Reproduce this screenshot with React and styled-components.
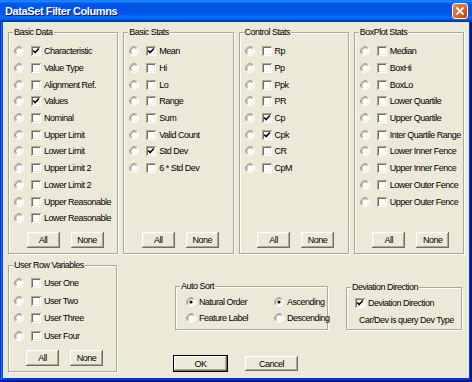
import React from 'react';
import styled, { createGlobalStyle } from 'styled-components';

const GlobalStyle = createGlobalStyle`
  html, body {
    margin: 0;
    padding: 0;
    background: #ece9d8;
  }
  * {
    box-sizing: border-box;
  }
`;

const uiFont = `"Liberation Sans", Arial, sans-serif`;

const groups = [
    {
        title: 'Basic Data',
        items: [
            ['Characteristic', true],
            ['Value Type', false],
            ['Alignment Ref.', false],
            ['Values', true],
            ['Nominal', false],
            ['Upper Limit', false],
            ['Lower Limit', false],
            ['Upper Limit 2', false],
            ['Lower Limit 2', false],
            ['Upper Reasonable', false],
            ['Lower Reasonable', false],
        ],
    },
    {
        title: 'Basic Stats',
        items: [
            ['Mean', true],
            ['Hi', false],
            ['Lo', false],
            ['Range', false],
            ['Sum', false],
            ['Valid Count', false],
            ['Std Dev', true],
            ['6 * Std Dev', false],
        ],
    },
    {
        title: 'Control Stats',
        items: [
            ['Rp', false],
            ['Pp', false],
            ['Ppk', false],
            ['PR', false],
            ['Cp', true],
            ['Cpk', true],
            ['CR', false],
            ['CpM', false],
        ],
    },
    {
        title: 'BoxPlot Stats',
        items: [
            ['Median', false],
            ['BoxHi', false],
            ['BoxLo', false],
            ['Lower Quartile', false],
            ['Upper Quartile', false],
            ['Inter Quartile Range', false],
            ['Lower Inner Fence', false],
            ['Upper Inner Fence', false],
            ['Lower Outer Fence', false],
            ['Upper Outer Fence', false],
        ],
    },
];

const userRows = ['User One', 'User Two', 'User Three', 'User Four'];

function Radio({ checked }) {
    return (
        <RadioSvg width="10" height="10" viewBox="0 0 10 10">
            <circle cx="5" cy="5" r="4" fill="#fff" />
            <path d="M1.82 8.18 A4.5 4.5 0 0 1 8.18 1.82" stroke="#aca899" fill="none" />
            <path d="M8.18 1.82 A4.5 4.5 0 0 1 1.82 8.18" stroke="#fff" fill="none" />
            <path d="M2.53 7.47 A3.5 3.5 0 0 1 7.47 2.53" stroke="#8a8778" fill="none" />
            <path d="M7.47 2.53 A3.5 3.5 0 0 1 2.53 7.47" stroke="#f1efe2" fill="none" />
            {checked && <circle cx="5" cy="5" r="1.6" fill="#000" />}
        </RadioSvg>
    );
}

function Check({ checked }) {
    return (
        <CheckBox>
            {checked && (
                <svg width="10" height="10" viewBox="0 0 10 10">
                    <path d="M2.2 4.6 L4.1 6.6 L7.9 2.6" stroke="#000" strokeWidth="1.5" fill="none" />
                </svg>
            )}
        </CheckBox>
    );
}

function ItemRow({ label, checked }) {
    return (
        <Row>
            <Radio />
            <Check checked={checked} />
            <Label>{label}</Label>
        </Row>
    );
}

function AllNone() {
    return (
        <ButtonRow>
            <Button>All</Button>
            <Button>None</Button>
        </ButtonRow>
    );
}

function App() {
    return (
        <>
            <GlobalStyle />
            <Window>
                <TitleBar>
                    <Title>DataSet Filter Columns</Title>
                    <CloseButton>
                        <svg width="10" height="10" viewBox="0 0 10 10">
                            <path d="M1.5 1.5 L8.5 8.5 M8.5 1.5 L1.5 8.5" stroke="#fff" strokeWidth="1.8" />
                        </svg>
                    </CloseButton>
                </TitleBar>
                <Client>
                    <TopRow>
                        {groups.map(g => (
                            <GroupBox key={g.title} $height={222} $padTop={10}>
                                <Legend>{g.title}</Legend>
                                <ItemList $rowHeight={16.7}>
                                    {g.items.map(([label, checked]) => (
                                        <ItemRow key={label} label={label} checked={checked} />
                                    ))}
                                </ItemList>
                                <AllNone />
                            </GroupBox>
                        ))}
                    </TopRow>
                    <BottomRow>
                        <UserGroup>
                            <GroupBox $height={107} $padTop={8}>
                                <Legend>User Row Variables</Legend>
                                <ItemList $rowHeight={17.7}>
                                    {userRows.map(label => (
                                        <ItemRow key={label} label={label} />
                                    ))}
                                </ItemList>
                                <AllNone />
                            </GroupBox>
                        </UserGroup>
                        <RightArea>
                            <OptionsRow>
                                <SortGroup>
                                    <Legend>Auto Sort</Legend>
                                    <SortGrid>
                                        <Option><Radio checked /><Label>Natural Order</Label></Option>
                                        <Option><Radio checked /><Label>Ascending</Label></Option>
                                        <Option><Radio /><Label>Feature Label</Label></Option>
                                        <Option><Radio /><Label>Descending</Label></Option>
                                    </SortGrid>
                                </SortGroup>
                                <DeviationGroup>
                                    <Legend>Deviation Direction</Legend>
                                    <Option><Check checked /><Label>Deviation Direction</Label></Option>
                                    <Note>Car/Dev is query Dev Type</Note>
                                </DeviationGroup>
                            </OptionsRow>
                            <DialogButtons>
                                <DialogButton $default>OK</DialogButton>
                                <DialogButton>Cancel</DialogButton>
                            </DialogButtons>
                        </RightArea>
                    </BottomRow>
                </Client>
            </Window>
        </>
    );
}

const Window = styled.div`
    width: 472px;
    height: 382px;
    display: flex;
    flex-direction: column;
    background: #0831d9;
    padding: 0 3px 4px 3px;
    box-shadow: inset -1px -1px #00138c, inset 1px 1px #0831d9, inset -2px -2px #001ea0,
        inset 2px 2px #166aee, inset -3px -3px #003bda, inset 3px 3px #0855dd;
    font-family: ${uiFont};
    font-size: 9px;
    letter-spacing: -0.5px;
    color: #000;
`;

const TitleBar = styled.div`
    height: 22px;
    margin: 0 -3px;
    padding: 0 4px 0 5px;
    display: flex;
    align-items: center;
    justify-content: space-between;
    background: linear-gradient(180deg, #0058ee 0%, #3593ff 4%, #288eff 6%, #127dff 8%, #036ffc 10%,
        #0262ee 14%, #0057e5 20%, #0054e3 24%, #0055eb 56%, #005bf5 66%, #026afe 76%,
        #0062ef 86%, #0052d6 92%, #0040ab 94%, #003092 100%);
`;

const Title = styled.span`
    color: #fff;
    font-weight: bold;
    font-size: 11px;
    letter-spacing: -0.4px;
    text-shadow: 1px 1px #0f1089;
`;

const CloseButton = styled.div`
    width: 16px;
    height: 16px;
    display: flex;
    align-items: center;
    justify-content: center;
    border: 1px solid #fff;
    border-radius: 3px;
    background: radial-gradient(circle at 85% 85%, #cc4600 0%, #dc6527 50%, #e8916e 100%);
`;

const Client = styled.div`
    flex: 1;
    background: #ece9d8;
    padding: 10px 5px 0 5px;
`;

const TopRow = styled.div`
    display: grid;
    grid-template-columns: repeat(4, minmax(0, 1fr));
    column-gap: 5px;
`;

const GroupBox = styled.div`
    position: relative;
    height: ${p => p.$height}px;
    display: flex;
    flex-direction: column;
    padding: ${p => p.$padTop}px 4px 5px 5px;
    border: 1px solid #aca899;
    box-shadow: inset 1px 1px #fff, 1px 1px #fff;
`;

const Legend = styled.span`
    position: absolute;
    top: -7px;
    left: 4px;
    padding: 0 1px;
    background: #ece9d8;
    line-height: 12px;
    white-space: nowrap;
`;

const ItemList = styled.div`
    display: grid;
    grid-auto-rows: ${p => p.$rowHeight}px;
`;

const Row = styled.div`
    display: flex;
    align-items: center;
    white-space: nowrap;
`;

const RadioSvg = styled.svg`
    flex: none;
    display: block;
`;

const CheckBox = styled.div`
    flex: none;
    width: 10px;
    height: 10px;
    margin-left: 7px;
    background: #fff;
    box-shadow: inset 1px 1px #aca899, inset -1px -1px #fff, inset 2px 2px #716f64, inset -2px -2px #f1efe2;
`;

const Label = styled.span`
    margin-left: 3px;
    white-space: nowrap;
`;

const ButtonRow = styled.div`
    margin-top: auto;
    display: flex;
    justify-content: center;
    gap: 11px;
    padding-left: 3px;
`;

const Button = styled.div`
    width: 33px;
    height: 16px;
    display: flex;
    align-items: center;
    justify-content: center;
    background: #ece9d8;
    box-shadow: inset -1px -1px #716f64, inset 1px 1px #fff, inset -2px -2px #aca899, inset 2px 2px #f1efe2;
`;

const BottomRow = styled.div`
    display: flex;
    align-items: flex-start;
    margin-top: 11px;
`;

const UserGroup = styled.div`
    width: 109px;
    flex: none;
`;

const RightArea = styled.div`
    margin-left: 58px;
    display: flex;
    flex-direction: column;
`;

const OptionsRow = styled.div`
    display: flex;
    align-items: flex-start;
    margin-top: 21px;
`;

const SortGroup = styled.div`
    position: relative;
    width: 153px;
    height: 44px;
    padding: 7px 0 0 10px;
    border: 1px solid #aca899;
    box-shadow: inset 1px 1px #fff, 1px 1px #fff;
`;

const SortGrid = styled.div`
    display: grid;
    grid-template-columns: 88px auto;
    grid-auto-rows: 16px;
`;

const Option = styled.div`
    display: flex;
    align-items: center;
    white-space: nowrap;
    height: 16px;

    ${CheckBox} {
        margin-left: 0;
    }
`;

const DeviationGroup = styled.div`
    position: relative;
    width: 116px;
    height: 43px;
    margin: 1px 0 0 18px;
    padding: 7px 0 0 8px;
    border: 1px solid #aca899;
    box-shadow: inset 1px 1px #fff, 1px 1px #fff;
`;

const Note = styled.div`
    margin: 1px 0 0 4px;
    height: 16px;
    line-height: 16px;
    white-space: nowrap;
`;

const DialogButtons = styled.div`
    display: flex;
    gap: 16px;
    margin: 25px 0 0 -2px;
`;

const DialogButton = styled.div`
    width: 55px;
    height: 17px;
    display: flex;
    align-items: center;
    justify-content: center;
    background: #ece9d8;
    border: 1px solid ${p => (p.$default ? '#000' : 'transparent')};
    box-shadow: inset -1px -1px #716f64, inset 1px 1px #fff, inset -2px -2px #aca899, inset 2px 2px #f1efe2;
`;

export default App;
